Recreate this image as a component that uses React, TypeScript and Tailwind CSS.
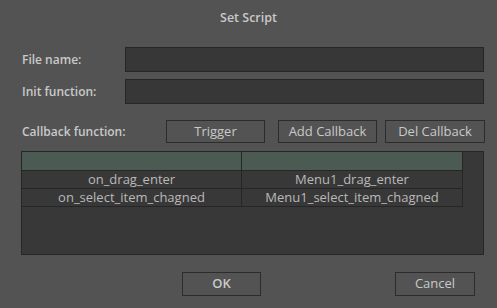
import { Fragment } from "react";

export default function App() {
  const rows = [
    ["on_drag_enter", "Menu1_drag_enter"],
    ["on_select_item_chagned", "Menu1_select_item_chagned"],
  ];

  return (
    <div
      className="w-[497px] h-[308px] bg-[#535353] text-[#c9c9c9] text-[12px] overflow-hidden"
      style={{ fontFamily: '"Open Sans", "Noto Sans", sans-serif' }}
    >
      <div className="pt-[9px] h-[27px] leading-[18px] text-center font-semibold text-[12.5px]">Set Script</div>

      <div className="mt-[20px] flex items-center h-[25px] pl-[22px]">
        <span className="w-[103px] font-semibold">File name:</span>
        <div className="w-[359px] h-[25px] bg-[#373737] border border-[#262626]" />
      </div>
      <div className="mt-[7px] flex items-center h-[25px] pl-[22px]">
        <span className="w-[103px] font-semibold">Init function:</span>
        <div className="w-[359px] h-[25px] bg-[#373737] border border-[#262626]" />
      </div>

      <div className="mt-[16px] flex items-center h-[23px] pl-[22px] text-[13px]">
        <span className="w-[144px] font-semibold text-[12px]">Callback function:</span>
        <button className="w-[99px] h-[23px] border border-[#2c2c2c] bg-[#535353] text-[#c9c9c9]">
          Trigger
        </button>
        <button className="ml-[13px] w-[99px] h-[23px] border border-[#2c2c2c] bg-[#535353] text-[#c9c9c9]">
          Add Callback
        </button>
        <button className="ml-[8px] w-[100px] h-[23px] border border-[#2c2c2c] bg-[#535353] text-[#c9c9c9]">
          Del Callback
        </button>
      </div>

      <div className="mt-[8px] ml-[21px] w-[463px] h-[104px] bg-[#383838] border border-[#262626]">
        <div className="w-[441px] grid grid-cols-[220px_221px] text-[#b8b8b8] text-[13px]">
          <div className="h-[19px] bg-[#4b5a52] border-r border-b border-[#262626]" />
          <div className="h-[19px] bg-[#4b5a52] border-r border-b border-[#262626]" />
          {rows.map(([a, b]) => (
            <Fragment key={a}>
              <div className="h-[18px] leading-[17px] text-center border-r border-b border-[#262626]">
                {a}
              </div>
              <div className="h-[18px] leading-[17px] text-center border-r border-b border-[#262626]">
                {b}
              </div>
            </Fragment>
          ))}
        </div>
      </div>

      <div className="mt-[17px] flex h-[24px] text-[13px]">
        <button className="ml-[182px] w-[79px] h-[24px] border border-[#2c2c2c] font-semibold text-[#c9c9c9]">
          OK
        </button>
        <button className="ml-[134px] w-[80px] h-[24px] border border-[#2c2c2c] text-[#c9c9c9]">
          Cancel
        </button>
      </div>
    </div>
  );
}
